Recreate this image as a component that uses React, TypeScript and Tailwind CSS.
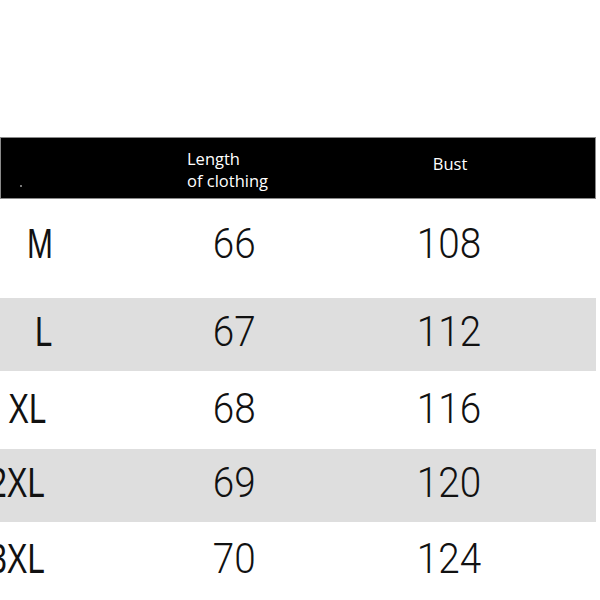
const rows = [
  { size: "M", length: 66, bust: 108, h: "h-[99px] pb-[11px]", pr: "pr-[17px]", bg: "bg-white" },
  { size: "L", length: 67, bust: 112, h: "h-[73px] pb-[6px]", pr: "pr-[18px]", bg: "bg-[#dedede]" },
  { size: "XL", length: 68, bust: 116, h: "h-[78px] pb-[4px]", pr: "pr-[24px]", bg: "bg-white" },
  { size: "2XL", length: 69, bust: 120, h: "h-[73px] pb-[7px]", pr: "pr-[25px]", bg: "bg-[#dedede]" },
  { size: "3XL", length: 70, bust: 124, h: "h-[75px] pb-[3px]", pr: "pr-[25px]", bg: "bg-white" },
]

export default function App() {
  return (
    <div className="w-[600px] h-[600px] bg-white overflow-hidden pt-[137px] font-['Liberation_Sans',Arial,sans-serif]">
      <div className="w-[596px]">
        {/* header */}
        <div className="h-[62px] bg-black border border-[#8a8a8a] flex items-center font-['Open_Sans',sans-serif] text-[16.5px] text-white">
          <div className="w-[70px] h-full relative">
            <span className="absolute left-[19px] top-[47px] size-[2px] bg-[#777]" />
          </div>
          <div className="w-[328px] pl-[116px] pt-[4px] leading-[22px]">
            <div>Length</div>
            <div>of clothing</div>
          </div>
          <div className="w-[102px] text-center pb-[8px]">Bust</div>
        </div>

        {rows.map((r) => (
          <div key={r.size} className={`flex items-center text-[42px] text-[#111] ${r.h} ${r.bg}`}>
            <div className={`w-[70px] flex justify-end ${r.pr}`}>
              <span className="inline-block scale-x-[0.74] origin-right">{r.size}</span>
            </div>
            <div className="w-[328px] flex justify-center font-['Roboto',sans-serif] font-light">
              <span className="inline-block scale-x-[0.92]">{r.length}</span>
            </div>
            <div className="w-[102px] flex justify-center font-['Roboto',sans-serif] font-light">
              <span className="inline-block scale-x-[0.92]">{r.bust}</span>
            </div>
          </div>
        ))}
      </div>
    </div>
  )
}
